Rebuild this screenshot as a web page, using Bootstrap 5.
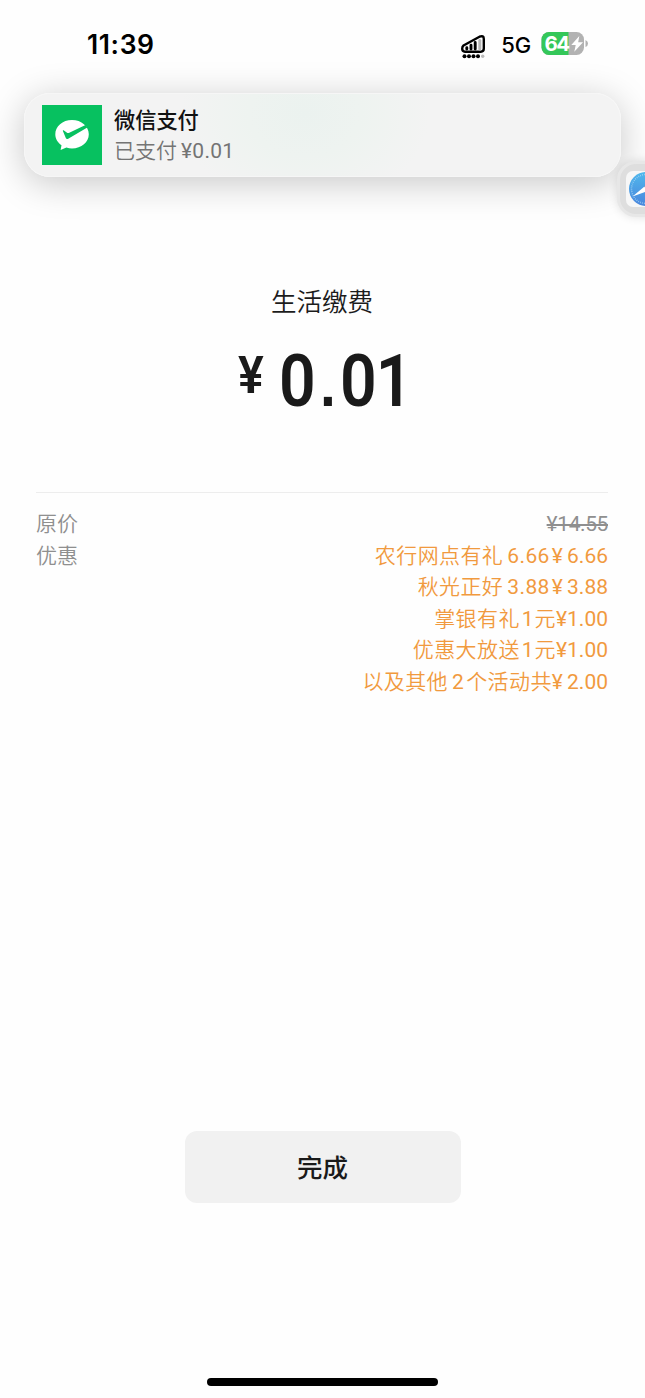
<!DOCTYPE html>
<html lang="zh-CN">
<head>
<meta charset="utf-8">
<meta name="viewport" content="width=device-width, initial-scale=1">
<title>支付完成</title>
<link href="https://cdn.jsdelivr.net/npm/bootstrap@5.3.0/dist/css/bootstrap.min.css" rel="stylesheet">
<style>
html, body { height: 100%; }
body { background: #fefefe; color: #1a1a1a; font-family: Roboto, "Noto Sans CJK SC", sans-serif; overflow: hidden; }
.screen { width: 645px; height: 1398px; }
.status { height: 93px; padding: 30px 57px 0 87px; color: #000; font-family: Inter, sans-serif; }
.clock { font-size: 26.5px; font-weight: 600; line-height: 28px; letter-spacing: .6px; }
.net { font-size: 22px; font-weight: 450; line-height: 30px; margin: 0 10px 0 15px; letter-spacing: -.1px; }
.notice { height: 84px; margin: 0 24px; padding: 0 17px; border-radius: 26px; border: 1px solid #f6f6f6;
  background: radial-gradient(ellipse 125px 95px at 47% 24%, #ebf2ef 0, #eef3f0 45%, #f3f3f3 100%); box-shadow: 0 6px 36px rgba(0,0,0,.22); }
.notice-title { font-size: 21.2px; font-weight: 500; line-height: 31px; color: #111; margin-top: 2px; }
.notice-text { font-size: 21px; line-height: 31px; color: #747474; font-weight: 350; }
.notice-text span { margin-left: 4px; letter-spacing: .3px; font-weight: 400; }
.assist { top: 161px; left: 617px; width: 58px; height: 56px; border-radius: 19px; background: #dedede; border: 3px solid #e7e7e7; box-shadow: 0 0 10px rgba(0,0,0,.12); padding: 7px 6px; }
.payee { margin-top: 105px; font-size: 25.5px; line-height: 40px; color: #1c1c1c; font-weight: 350; text-indent: -1px; }
.total { margin-top: 16px; height: 99px; font-weight: 600; color: #1a1a1a; }
.yen { font-size: 52px; line-height: 60px; margin: 8px 15px 0 0; width: 27px; transform: scaleX(.93); }
.sum { font-size: 73px; line-height: 86px; }
.sum span { display: flex; justify-content: center; width: 36.5px; transform: scaleX(.88); }
.sum .point { width: 24px; padding-top: 4px; font-family: "Liberation Sans", sans-serif; font-weight: 700; font-size: 62px; transform: scaleX(.92); }
.sum .one { width: 28px; margin-left: 4px; }
.detail { margin: 0 37px 0 36px; padding-top: 16px; border-top: 1px solid #ededed; font-size: 21px; line-height: 31.5px; color: #8f8f8f; font-weight: 350; }
.detail s { font-weight: 400; letter-spacing: -.4px; }
.promo { color: #f19a3e; letter-spacing: .4px; }
.promo b { font-weight: 400; letter-spacing: 0; word-spacing: -1px; }
.promo .count { margin: 0 2px 0 4px; letter-spacing: .4px; }
.promo .unit { margin: 0 1px 0 2px; }
.done { width: 276px; height: 72px; border-radius: 12px; background: #f1f1f1; color: #1a1a1a; font-size: 25.5px; font-weight: 500; border: 0; padding-top: 8px; margin-bottom: 195px; }
.homebar { width: 231px; height: 8px; left: 207px; top: 1378px; background: #000; }
</style>
</head>
<body>
<div class="screen position-relative d-flex flex-column">
  <header class="status d-flex justify-content-between align-items-start">
    <div class="clock">11:39</div>
    <div class="d-flex align-items-start">
      <svg class="mt-1" width="26" height="28" viewBox="0 0 26 28">
        <path d="M3.500 11.500L19.500 2.700Q23.800 1 23.800 5V14.500Q23.800 17.700 20.800 17.700H5Q2.200 17.700 2.200 14.800Q2.200 12.500 3.500 11.500Z" fill="#fff" stroke="#000" stroke-width="2.4" stroke-linejoin="round"/>
        <path d="M6.8 13.8V15M11 11.2V15M15.200 8.500V15" stroke="#000" stroke-width="2.900" stroke-linecap="round"/>
        <path d="M19.800 6.500V15" stroke="#b7b7b7" stroke-width="3" stroke-linecap="round"/>
        <g><circle cx="4.5" cy="22.300" r="2"/><circle cx="9" cy="22.300" r="2"/><circle cx="13.5" cy="22.300" r="2"/><circle cx="18" cy="22.300" r="2"/><circle cx="22.7" cy="22.300" r="1.7" fill="#bbb"/></g>
      </svg>
      <span class="net">5G</span>
      <svg width="47" height="27" viewBox="0 -1 47 27">
        <defs><clipPath id="cell"><rect x="0.500" y="1" width="42.500" height="23" rx="7.5"/></clipPath></defs>
        <g clip-path="url(#cell)"><path d="M0 0H43V25H0Z" fill="#b2b2b2"/><path d="M0 0H27.5V25H0Z" fill="#34c759"/></g>
        <path d="M44.5 9Q47 10 47 12.5T44.5 16Z" fill="#b2b2b2"/>
        <text x="3.500" y="19.800" fill="#fff" font-family="Inter" font-size="20.500" font-weight="700" textLength="25.500">64</text>
        <path d="M38.3 5L30.3 14H34.7L33.300 20.8L42 11.3H37.2Z" fill="#fff"/>
      </svg>
    </div>
  </header>

  <section class="notice d-flex align-items-center flex-shrink-0">
    <svg class="flex-shrink-0" width="60" height="60" viewBox="0 0 60 60">
      <path d="M0 0H60V60H0Z" fill="#07c160"/>
      <path d="M30 15C20.500 15 13.300 21.300 13.300 29.200C13.300 33.800 15.700 37.600 19.500 40.200L18.600 45L24.400 42.600C26.200 43.200 28 43.400 30 43.400C39.500 43.400 46.800 37.100 46.800 29.200C46.800 21.300 39.500 15 30 15Z" fill="#fff"/>
      <path d="M43.500 20L27.300 27.700C26.300 28.200 25.600 28.100 24.700 27.500L21.600 25.300Q20.600 25 20.900 26.100L23.800 33Q24.500 34.600 26.200 33.700L45.300 22.400Z" fill="#07c160"/>
    </svg>
    <div class="ms-2 ps-1">
      <div class="notice-title">微信支付</div>
      <div class="notice-text">已支付<span>¥0.01</span></div>
    </div>
  </section>

  <main class="flex-grow-1">
    <div class="payee text-center">生活缴费</div>
    <div class="total d-flex justify-content-center align-items-start">
      <span class="yen">¥</span>
      <div class="sum d-flex"><span>0</span><span class="point">.</span><span>0</span><span class="one">1</span></div>
    </div>
  </main>

  <section class="detail">
    <div class="d-flex justify-content-between"><span>原价</span><s>¥14.55</s></div>
    <div class="d-flex justify-content-between">
      <div>优惠</div>
      <div class="promo text-end">
        <div>农行网点有礼<b class="count">6.66</b><b>¥ 6.66</b></div>
        <div>秋光正好<b class="count">3.88</b><b>¥ 3.88</b></div>
        <div>掌银有礼<b class="unit">1</b>元<b>¥1.00</b></div>
        <div>优惠大放送<b class="unit">1</b>元<b>¥1.00</b></div>
        <div>以及其他<b class="count">2</b>个活动共<b>¥ 2.00</b></div>
      </div>
    </div>
  </section>

  <footer class="d-flex justify-content-center align-items-end" style="height:700px">
    <button class="btn done" type="button">完成</button>
  </footer>

  <div class="assist position-absolute">
    <svg width="42" height="36" viewBox="0 0 42 36"><defs><linearGradient id="sky" x2="0" y2="1"><stop stop-color="#50b8ec"/><stop offset="1" stop-color="#4a86dd"/></linearGradient></defs><rect width="42" height="36" rx="7" fill="#f7f7f7"/><circle cx="20" cy="18" r="17" fill="url(#sky)"/><circle cx="20" cy="18" r="14.500" fill="none" stroke="#a5d5f5" stroke-width="1.500" stroke-dasharray=".7 1.300"/><path d="M6.500 25.500L18.500 15.500L21.500 20Z" fill="#fff"/><path d="M18.500 15.500L32 8L21.500 20Z" fill="#ef5350"/></svg>
  </div>
  <div class="homebar rounded-pill position-absolute"></div>
</div>
<script src="https://cdn.jsdelivr.net/npm/bootstrap@5.3.0/dist/js/bootstrap.bundle.min.js"></script>
</body>
</html>
